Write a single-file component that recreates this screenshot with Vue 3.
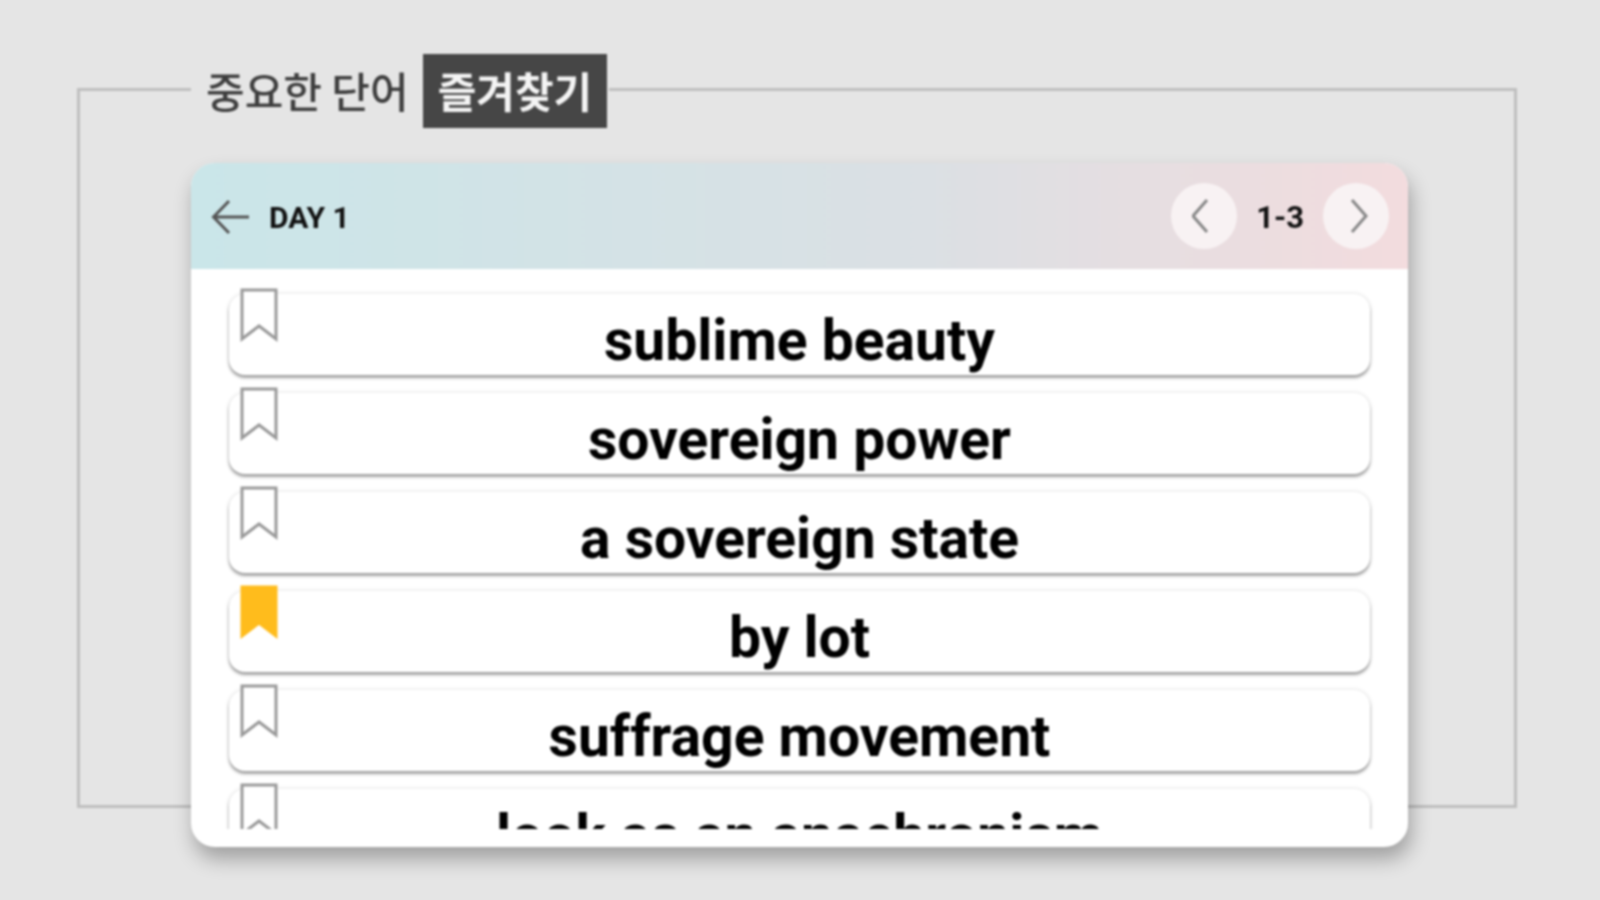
<template>
  <div class="page">
    <div class="frame">
      <div class="legend">
        <span class="legend-text">중요한 단어</span>
        <span class="legend-tag">즐겨찾기</span>
      </div>

      <div class="card">
        <header class="card-head">
          <svg class="back" viewBox="0 0 40 36" fill="none">
            <path d="M38 18H3M18 2 2.500 18 18 34" />
          </svg>
          <span class="day">DAY 1</span>
          <div class="pager">
            <button class="round">
              <svg viewBox="0 0 24 36" fill="none"><path d="M15 2 1 18l14 16" /></svg>
            </button>
            <span class="range">1-3</span>
            <button class="round">
              <svg viewBox="0 0 24 36" fill="none"><path d="M8 2l14 16L8 34" /></svg>
            </button>
          </div>
        </header>

        <div class="list">
          <div v-for="item in items" :key="item.text" class="row">
            <svg class="mark" :class="{ on: item.saved }" viewBox="0 0 38 54">
              <path d="M2 2h34v49L19 38 2 51z" />
            </svg>
            <span class="word">{{ item.text }}</span>
          </div>
        </div>
      </div>
    </div>
  </div>
</template>

<script setup>
const items = [
  { text: 'sublime beauty', saved: false },
  { text: 'sovereign power', saved: false },
  { text: 'a sovereign state', saved: false },
  { text: 'by lot', saved: true },
  { text: 'suffrage movement', saved: false },
  { text: 'look as an anachronism', saved: false },
]
</script>

<style>
body {
  background: #e4e4e4;
}
</style>

<style scoped>
.page {
  width: 1600px;
  height: 900px;
  padding: 88px 83px 0 77px;
  box-sizing: border-box;
  overflow: hidden;
  background: #e5e5e5;
  font-family: Roboto, "Noto Sans CJK KR", sans-serif;
  filter: blur(0.9px);
}

.frame {
  height: 720px;
  padding: 0 106px 0 111px;
  box-sizing: border-box;
  border: 3px solid #bfbfbf;
}

.legend {
  display: inline-flex;
  align-items: center;
  gap: 14px;
  height: 74px;
  margin-top: -37px;
  margin-bottom: 35px;
  padding: 0 2px 0 15px;
  background: #e5e5e5;
  vertical-align: top;
}

.legend-text {
  padding-bottom: 4px;
  font-size: 42px;
  font-weight: 500;
  color: #3e3e3e;
  font-family: "Noto Sans CJK KR", sans-serif;
}

.legend-tag {
  display: flex;
  align-items: center;
  height: 74px;
  padding: 0 15px 4px;
  box-sizing: border-box;
  font-size: 42px;
  font-weight: 700;
  color: #f4f4f4;
  background: #464646;
  font-family: "Noto Sans CJK KR", sans-serif;
}

.card {
  height: 684px;
  border-radius: 24px;
  overflow: hidden;
  background: #fff;
  box-shadow: 3px 12px 20px rgba(0, 0, 0, 0.3);
}

.card-head {
  display: flex;
  align-items: center;
  height: 106px;
  padding: 2px 19px 0 20px;
  box-sizing: border-box;
  background: linear-gradient(90deg, #cae6e9, #dbe0e4 60%, #f3dcde);
}

.back {
  width: 40px;
  height: 36px;
}

.back path,
.round path {
  stroke: #555;
  stroke-width: 3;
}

.day {
  margin-left: 18px;
  font-size: 30px;
  font-weight: 700;
  color: #111;
}

.pager {
  display: flex;
  align-items: center;
  gap: 19px;
  margin-left: auto;
  margin-top: -2px;
}

.range {
  margin-top: 2px;
  font-size: 31px;
  font-weight: 700;
  color: #111;
}

.round {
  display: flex;
  align-items: center;
  justify-content: center;
  width: 66px;
  height: 66px;
  padding: 0;
  border: 0;
  border-radius: 50%;
  background: #f8f2f3;
}

.round svg {
  width: 24px;
  height: 36px;
}

.round path {
  stroke: #888;
}

.list {
  display: flex;
  flex-direction: column;
  gap: 18px;
  height: 560px;
  padding: 25px 38px 0;
  box-sizing: border-box;
  overflow: hidden;
}

.row {
  position: relative;
  flex: 0 0 81px;
  display: flex;
  justify-content: center;
  align-items: center;
  border-radius: 16px;
  background: #fff;
  box-shadow: 0 3px 3px rgba(0, 0, 0, 0.34), 0 0 4px rgba(0, 0, 0, 0.14);
}

.mark {
  position: absolute;
  left: 11px;
  top: -6px;
  width: 38px;
  height: 54px;
}

.mark path {
  fill: #fff;
  stroke: #9a9a9a;
  stroke-width: 3;
}

.mark.on path {
  fill: #ffbc1c;
  stroke: #ffbc1c;
}

.word {
  margin-top: 12px;
  font-size: 57px;
  font-weight: 700;
  color: #000;
}
</style>
